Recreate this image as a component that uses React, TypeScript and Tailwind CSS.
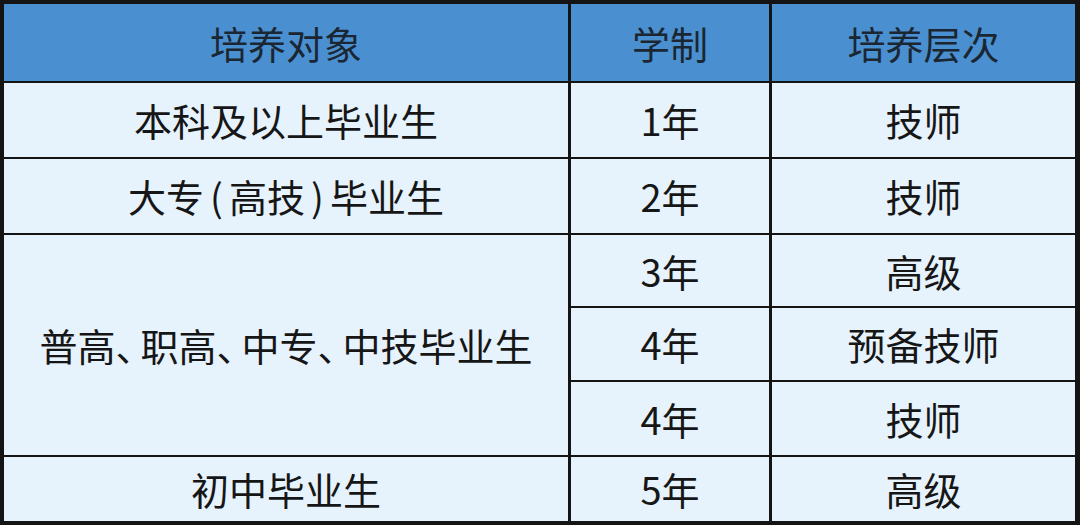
import React from "react";

const font = { fontFamily: '"Noto Sans CJK SC", "Noto Sans", sans-serif' };

function Cell({ children, head = false, className = "" }: { children: React.ReactNode; head?: boolean; className?: string }) {
  return (
    <div
      className={`flex items-center justify-center text-[38px] leading-none whitespace-nowrap ${
        head ? "bg-[#4a90d0] text-[#1b2633]" : "bg-[#e6f2fc] text-[#161616]"
      } ${className}`}
    >
      {children}
    </div>
  );
}

function Comma() {
  return <span className="inline-block mr-[6px] [font-feature-settings:'halt']">、</span>;
}

function Paren({ c }: { c: string }) {
  return <span className="inline-block w-[25px] text-center">{c}</span>;
}

export default function App() {
  return (
    <div className="w-[1080px] h-[525px] bg-[#141414] border-t-4 border-l-4 border-b-4 border-r-[5px] border-[#141414] overflow-hidden" style={font}>
      <div className="grid grid-cols-[564px_198px_303px] grid-rows-[77px_74px_74px_71px_72px_73px_64px] gap-x-[3px] gap-y-[2px] h-full">
        <Cell head>培养对象</Cell>
        <Cell head>学制</Cell>
        <Cell head>培养层次</Cell>

        <Cell>本科及以上毕业生</Cell>
        <Cell>1年</Cell>
        <Cell>技师</Cell>

        <Cell>
          大专<Paren c="(" />高技<Paren c=")" />毕业生
        </Cell>
        <Cell>2年</Cell>
        <Cell>技师</Cell>

        <Cell className="row-span-3">
          普高<Comma />职高<Comma />中专<Comma />中技毕业生
        </Cell>
        <Cell>3年</Cell>
        <Cell>高级</Cell>
        <Cell>4年</Cell>
        <Cell>预备技师</Cell>
        <Cell>4年</Cell>
        <Cell>技师</Cell>

        <Cell>初中毕业生</Cell>
        <Cell>5年</Cell>
        <Cell>高级</Cell>
      </div>
    </div>
  );
}
